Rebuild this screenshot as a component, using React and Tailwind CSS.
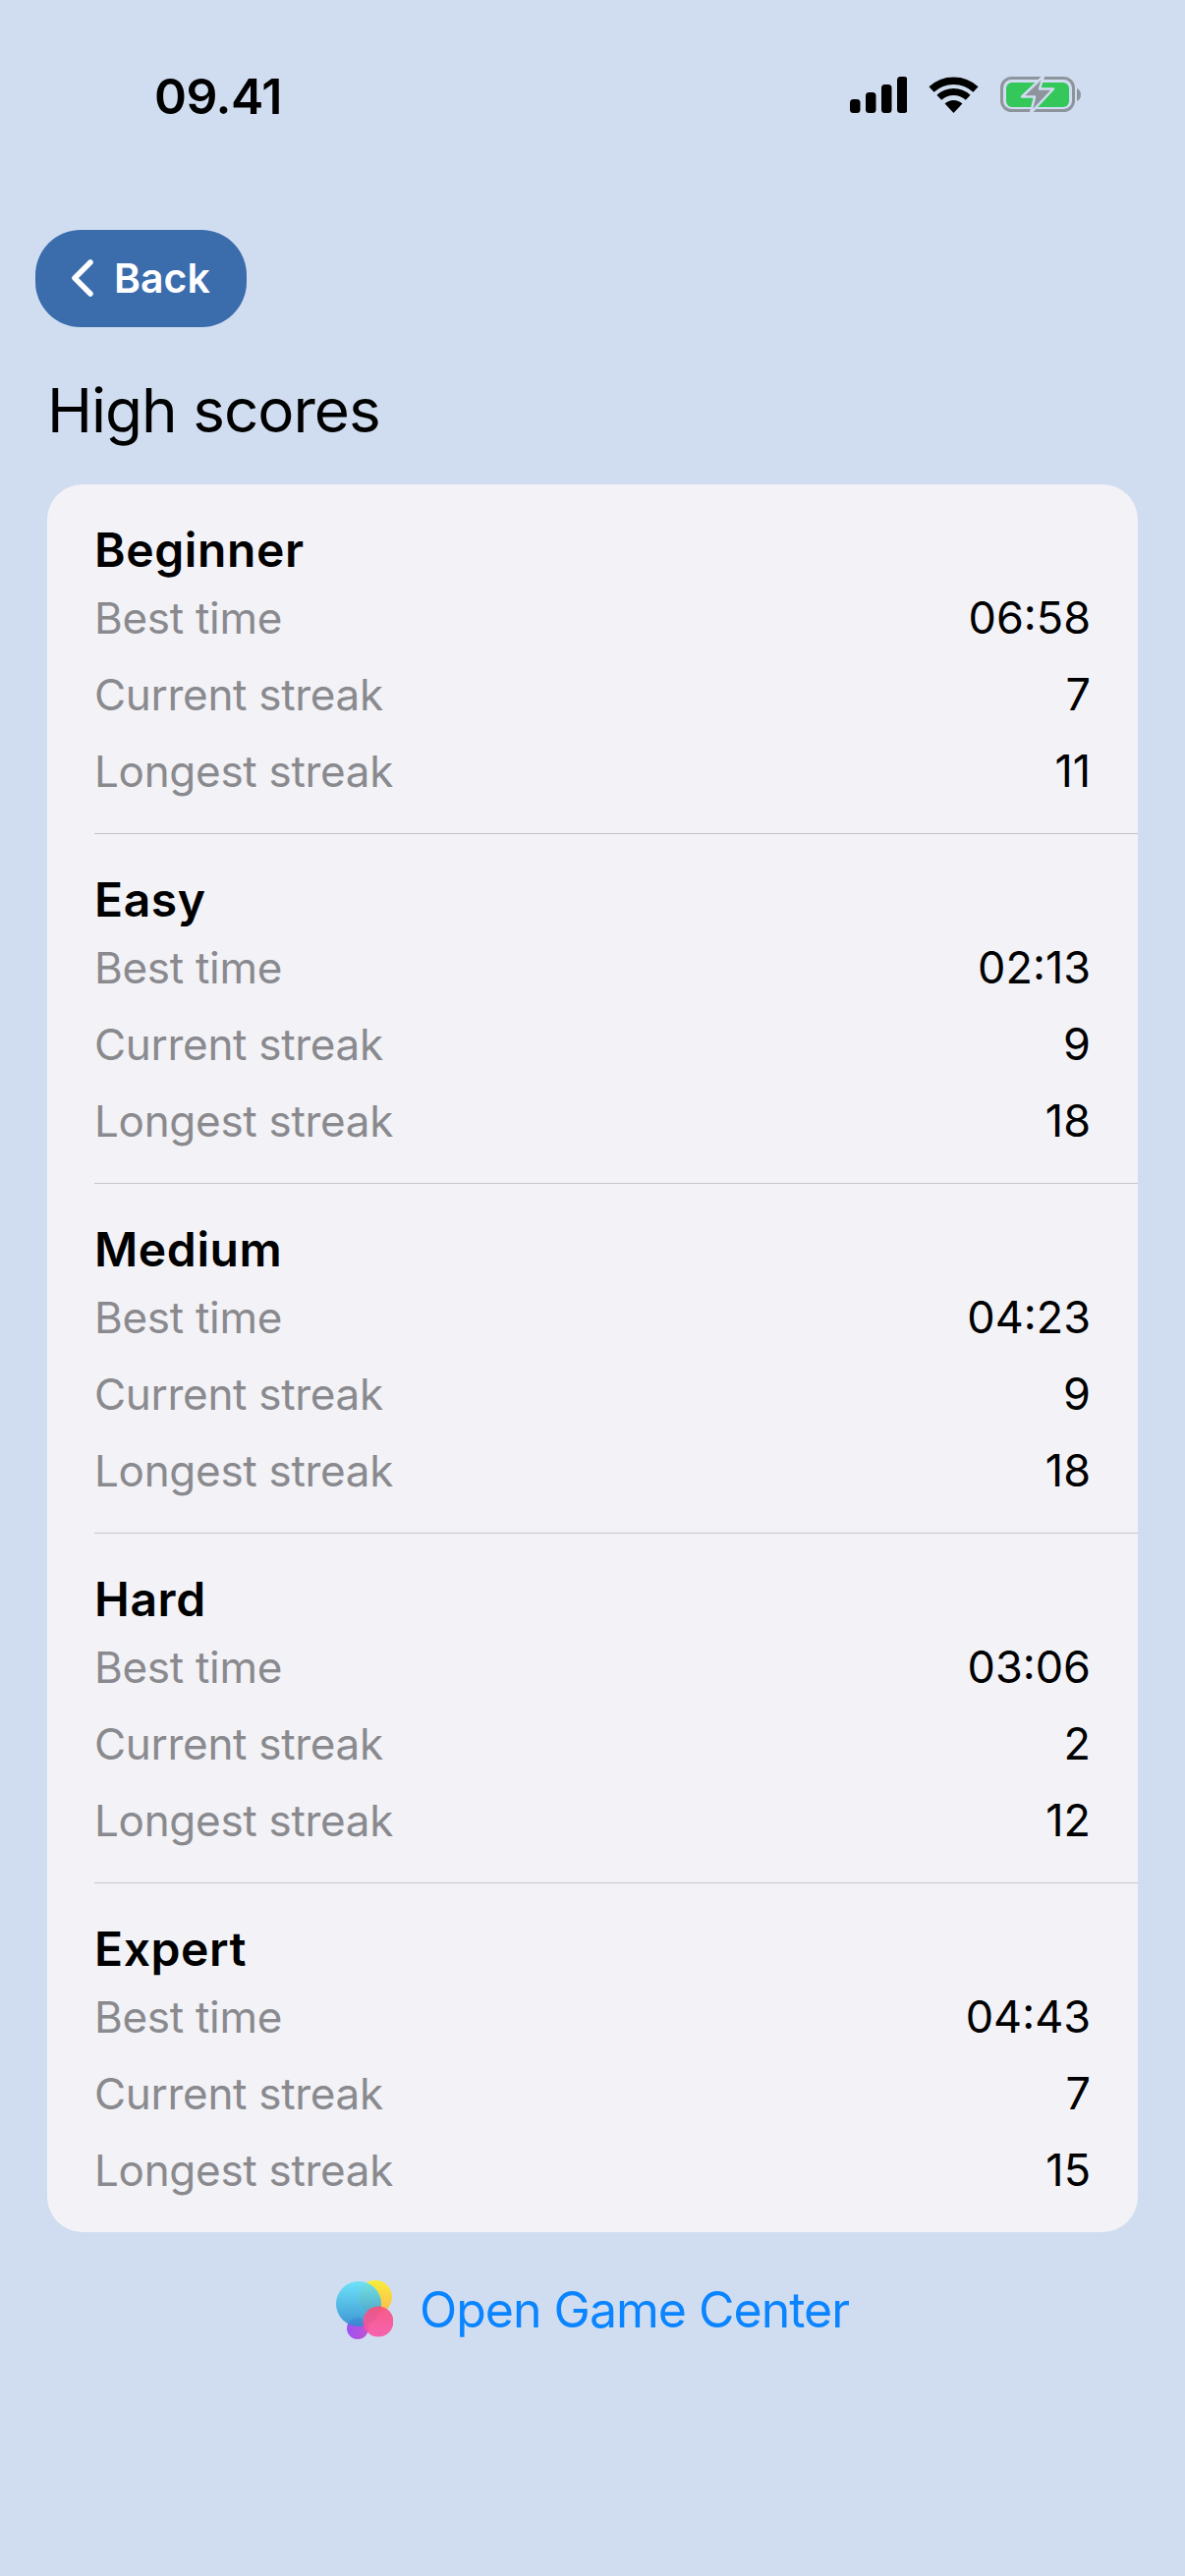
const sections = [
  { name: 'Beginner', best: '06:58', current: '7', longest: '11' },
  { name: 'Easy', best: '02:13', current: '9', longest: '18' },
  { name: 'Medium', best: '04:23', current: '9', longest: '18' },
  { name: 'Hard', best: '03:06', current: '2', longest: '12' },
  { name: 'Expert', best: '04:43', current: '7', longest: '15' },
];

const StatusIcons = () => (
  <div className="flex items-center">
    <svg width="58" height="37" viewBox="0 0 58 37" className="mr-[22px]">
      <rect x="0" y="23" width="10.5" height="14" rx="3.5" fill="#000" />
      <rect x="16" y="16" width="10.5" height="21" rx="3.5" fill="#000" />
      <rect x="32" y="8" width="10.5" height="29" rx="3.5" fill="#000" />
      <rect x="48" y="0" width="10.5" height="37" rx="3.5" fill="#000" />
    </svg>
    <svg width="51" height="37" viewBox="0 0 51 37" className="mr-[22px]">
      <path d="M3 13A33 33 0 0 1 48 13" fill="none" stroke="#000" strokeWidth="7.5" />
      <path d="M10.8 21.3A21.500 21.500 0 0 1 40.200 21.300" fill="none" stroke="#000" strokeWidth="7" />
      <path d="M25.500 37L16.600 27.500A13 13 0 0 1 34.400 27.500Z" fill="#000" />
    </svg>
    <svg width="82" height="40" viewBox="0 0 82 40">
      <rect x="1.500" y="3.500" width="73" height="33" rx="10" fill="none" stroke="#8e949d" strokeWidth="3" />
      <rect x="6" y="8" width="64" height="25" rx="6" fill="#34c759" />
      <path d="M78 14c2.500 1 4 3.500 4 6.500s-1.500 5.500-4 6.500z" fill="#8e949d" />
      <path d="M44 1.500L22 22.500h13l-4 16.500 23-24.500H40z" fill="#8e949d" stroke="#d0ddf0" strokeWidth="2.5" strokeLinejoin="round" />
    </svg>
  </div>
);

const GameCenterLogo = () => (
  <svg width="58" height="60" viewBox="0 0 58 60">
    <defs>
      <linearGradient id="gcBlue" x1="0" y1="0" x2="0" y2="1">
        <stop offset="0" stopColor="#5fe3fa" />
        <stop offset="1" stopColor="#2a8ccf" />
      </linearGradient>
      <linearGradient id="gcYellow" x1="0" y1="0" x2="0" y2="1">
        <stop offset="0" stopColor="#f9ee3a" />
        <stop offset="1" stopColor="#fbb84f" />
      </linearGradient>
      <linearGradient id="gcPink" x1="0" y1="0" x2="0" y2="1">
        <stop offset="0" stopColor="#fb4f7c" />
        <stop offset="1" stopColor="#fb54a8" />
      </linearGradient>
      <linearGradient id="gcPurple" x1="0" y1="0" x2="1" y2="0">
        <stop offset="0" stopColor="#9d52f5" />
        <stop offset="1" stopColor="#c052d0" />
      </linearGradient>
    </defs>
    <circle cx="22" cy="49" r="11" fill="url(#gcPurple)" />
    <circle cx="40" cy="17" r="17" fill="url(#gcYellow)" />
    <circle cx="23" cy="24" r="23" fill="url(#gcBlue)" fillOpacity="0.88" />
    <circle cx="43" cy="42" r="15.500" fill="url(#gcPink)" fillOpacity="0.9" />
  </svg>
);

const Row = ({ label, value }) => (
  <div className="flex h-[78px] items-center justify-between pr-[48px]">
    <span className="text-[44px] tracking-[-0.3px] text-[#8a8a8e]">{label}</span>
    <span className="text-[45px] text-black">{value}</span>
  </div>
);

export default function App() {
  return (
    <div
      className="h-[2622px] w-[1206px] overflow-hidden bg-[#d0ddf0] leading-[54px]"
      style={{ fontFamily: 'Inter, "Liberation Sans", sans-serif' }}
    >
      <div className="mt-[64px] flex h-[64px] items-center justify-between pr-[106px] pl-[157px]">
        <span className="pt-[4px] text-[50px] font-semibold tracking-[-0.5px] text-black">09.41</span>
        <StatusIcons />
      </div>

      <div className="mt-[106px] pl-[36px]">
        <button className="flex h-[99px] w-[215px] items-center rounded-[46px] bg-[#3b6dad] pb-[2px] pl-[36px] text-[41px] font-semibold text-white">
          <svg width="24" height="38" viewBox="0 0 24 38" className="mr-[20px]">
            <path d="M20 3L4 19l16 16" fill="none" stroke="#fff" strokeWidth="5.500" strokeLinecap="round" strokeLinejoin="round" />
          </svg>
          Back
        </button>
      </div>

      <h1 className="mt-[49px] pl-[48px] text-[62px] leading-[72px] font-normal tracking-[-1px] text-black">High scores</h1>

      <div className="mx-[48px] mt-[39px] rounded-[36px] bg-[#f2f2f7] pl-[48px]">
        {sections.map((s, i) => (
          <div key={s.name} className={i < sections.length - 1 ? 'h-[356px] border-b border-[#c6c6c8] pt-[40px]' : 'h-[355px] pt-[40px]'}>
            <div className="mb-[1px] h-[56px] text-[48px] font-semibold tracking-[0.6px] text-black">{s.name}</div>
            <Row label="Best time" value={s.best} />
            <Row label="Current streak" value={s.current} />
            <Row label="Longest streak" value={s.longest} />
          </div>
        ))}
      </div>

      <div className="mt-[49px] flex items-start justify-center gap-[27px]">
        <GameCenterLogo />
        <span className="pt-[3px] text-[50px] tracking-[-1px] text-[#0a84ff]">Open Game Center</span>
      </div>
    </div>
  );
}
